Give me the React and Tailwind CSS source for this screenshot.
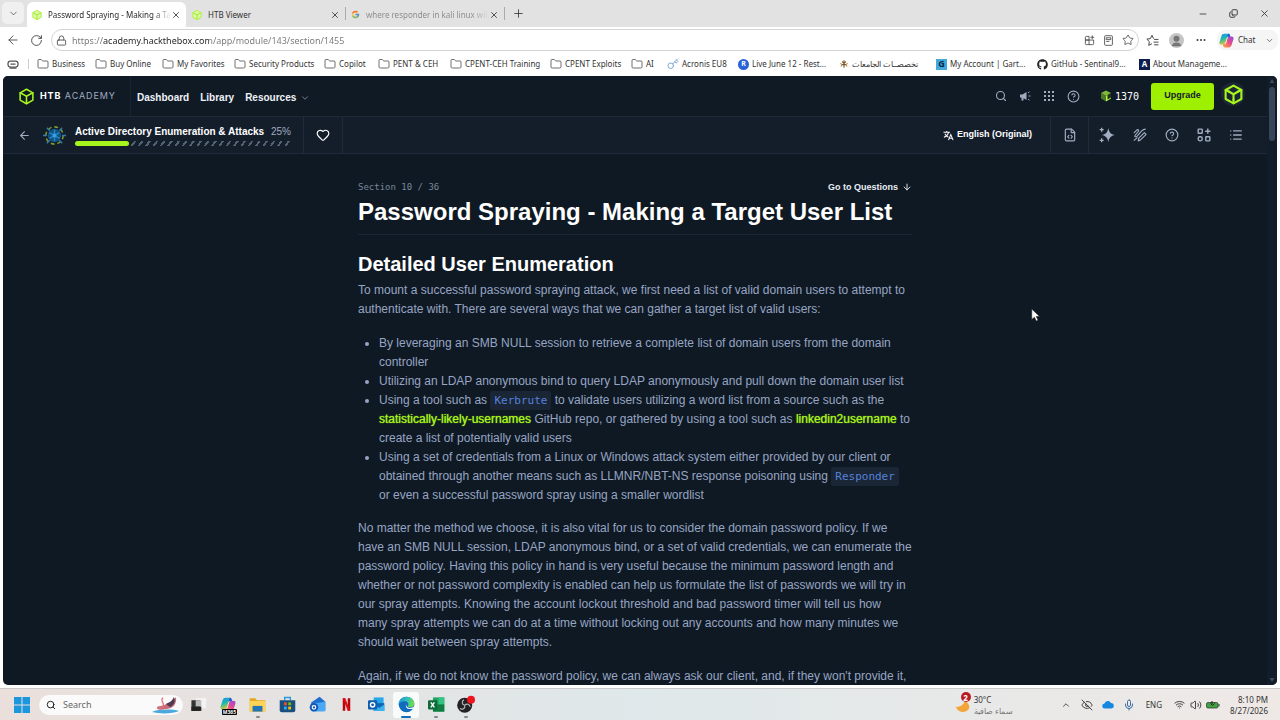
import React from "react";
import {
  ArrowLeft, ArrowDown, ChevronDown, ChevronUp, RotateCw, Lock, X, Plus, Minus, Star, Ellipsis,
  Search, Heart, CircleQuestionMark, List, FileCode, Mic, Wifi, Volume2, EyeOff, Folder, Copy, Key,
} from "lucide-react";
import { FcGoogle } from "react-icons/fc";
import { FaGithub } from "react-icons/fa";

const UI = "font-['Noto_Sans','Open_Sans',sans-serif]";

function Cube({ className, stroke = 2 }) {
  return (
    <svg viewBox="0 0 24 24" className={className} fill="none" stroke="currentColor" strokeWidth={stroke} strokeLinejoin="round" strokeLinecap="round" aria-hidden="true">
      <path d="M12 1.8 21 6.9v10.2l-9 5.1-9-5.1V6.9z" />
      <path d="M6.6 8.6 12 11.7l5.4-3.1M12 11.7v6.4" />
      <path d="M3 6.9l3.6 1.7M21 6.9l-3.6 1.7M12 18v4" />
    </svg>
  );
}

function CopilotMark({ className }) {
  return (
    <svg viewBox="0 0 24 24" className={className} aria-hidden="true">
      <defs>
        <linearGradient id="cpA" x1="0" y1="0" x2="0.4" y2="1">
          <stop offset="0" stopColor="#1b8ff0" /><stop offset="0.5" stopColor="#19b8b0" /><stop offset="1" stopColor="#e8c92a" />
        </linearGradient>
        <linearGradient id="cpB" x1="1" y1="0" x2="0.2" y2="1">
          <stop offset="0" stopColor="#8a4be8" /><stop offset="0.5" stopColor="#e5488f" /><stop offset="1" stopColor="#ff9a45" />
        </linearGradient>
      </defs>
      <path d="M8.500 1h6.200c1.400 0 2.200.8 2.600 2.200l.8 2.800h-2.900c-1.500 0-2.400.8-2.800 2.200L10 16.500c-.5 1.400-1.300 2-2.700 2H4C1.400 18.500.2 16.800.9 14.200L3.900 4.800C4.700 2.200 6.200 1 8.500 1z" fill="url(#cpA)" />
      <path d="M15.500 23H9.300c-1.400 0-2.200-.8-2.600-2.200L5.900 18h2.900c1.500 0 2.400-.8 2.800-2.200L14 7.500c.5-1.400 1.300-2 2.700-2H20c2.600 0 3.800 1.700 3.100 4.300l-3 9.400c-.8 2.600-2.300 3.800-4.600 3.800z" fill="url(#cpB)" />
      <path d="M14.700 1c1.400 0 2.200.8 2.600 2.200l.8 2.800h-2.900c-1.500 0-2.400.8-2.800 2.200z" fill="#2a54d8" />
    </svg>
  );
}

function TabCube() {
  return (
    <svg viewBox="0 0 24 24" className="size-[10px] shrink-0" aria-hidden="true">
      <path d="M12 1 22 6.500v11L12 23 2 17.500v-11z" fill="#dcfaa5" stroke="#b4f04a" strokeWidth="2.500" />
      <path d="M3 7l9 5 9-5M12 12v10" fill="none" stroke="#a4e83a" strokeWidth="2.500" />
    </svg>
  );
}

function Tabs() {
  return (
    <div className={`flex h-[27px] shrink-0 items-end bg-[#e2e2e2] text-[8px] text-[#333] ${UI}`}>
      <button aria-label="Tab actions" className="mb-[3px] ml-[2px] flex h-[22px] w-[22px] items-center justify-center rounded-[5px] bg-[#f0f0f0]">
        <ChevronDown className="size-[11px]" strokeWidth={1.5} />
      </button>
      <div className="ml-[3px] flex h-[25px] w-[159px] items-center rounded-t-[6px] bg-white pl-[5px]">
        <TabCube />
        <span className="ml-[6px] w-[123px] shrink-0 overflow-hidden whitespace-nowrap bg-linear-to-r from-[#222] from-85% to-white bg-clip-text text-transparent">Password Spraying - Making a Target</span>
        <button aria-label="Close tab"><X className="size-[10px]" strokeWidth={2} /></button>
      </div>
      <div className="flex h-[25px] w-[159px] items-center pl-[6px]">
        <TabCube />
        <span className="ml-[6px] w-[122px]">HTB Viewer</span>
        <button aria-label="Close tab"><X className="size-[10px]" strokeWidth={2} /></button>
      </div>
      <div className="mb-[7px] h-[13px] w-px bg-[#aaa]" />
      <div className="flex h-[25px] w-[158px] items-center pl-[5px]">
        <FcGoogle className="size-[9px] shrink-0 opacity-70" />
        <span className="ml-[6px] w-[123px] shrink-0 overflow-hidden whitespace-nowrap bg-linear-to-r from-[#888] from-85% to-[#e2e2e2] bg-clip-text text-transparent">where responder in kali linux will save</span>
        <button aria-label="Close tab"><X className="size-[10px]" strokeWidth={2} /></button>
      </div>
      <div className="mb-[7px] h-[13px] w-px bg-[#aaa]" />
      <button aria-label="New tab" className="mb-[7px] ml-[7px]"><Plus className="size-[13px]" strokeWidth={1.5} /></button>
      <div className="mb-[8px] ml-auto mr-[10px] flex items-center gap-[21px]">
        <button aria-label="Minimize"><Minus className="size-[10px]" strokeWidth={2} /></button>
        <button aria-label="Restore"><Copy className="size-[9px] -scale-y-100" strokeWidth={2.5} /></button>
        <button aria-label="Close"><X className="size-[11px]" strokeWidth={1.8} /></button>
      </div>
    </div>
  );
}

function Toolbar() {
  return (
    <div className={`flex h-[26px] shrink-0 items-center bg-white text-[#444] ${UI}`}>
      <button aria-label="Back" className="ml-[6px]"><ArrowLeft className="size-[14px]" strokeWidth={1.5} /></button>
      <button aria-label="Refresh" className="ml-[10px]"><RotateCw className="size-[13px]" strokeWidth={1.7} /></button>
      <div className="ml-[8px] flex h-[22px] flex-1 items-center rounded-full border border-[#d4d4d4] px-[4px]">
        <Lock className="size-[11px] shrink-0" strokeWidth={1.8} />
        <input
          aria-label="Address"
          defaultValue="https://academy.hackthebox.com/app/module/143/section/1455"
          className="ml-[5px] h-[16px] min-w-0 flex-1 bg-[linear-gradient(90deg,#777_31px,#222_31px,#222_137px,#777_137px)] bg-clip-text text-[9px] text-transparent caret-black outline-none"
        />
        <div className="flex items-center gap-[8px]">
          <button aria-label="Apps">
            <svg viewBox="0 0 24 24" className="size-[11px]" fill="none" stroke="currentColor" strokeWidth="1.800"><path d="M11 3H5a2 2 0 0 0-2 2v6h8zM3 11v8a2 2 0 0 0 2 2h6V11zM11 11h10v8a2 2 0 0 1-2 2h-8M18 1v8M14 5h8" /></svg>
          </button>
          <button aria-label="Immersive reader">
            <svg viewBox="0 0 24 24" className="size-[11px]" fill="none" stroke="currentColor" strokeWidth="1.800"><rect x="3.500" y="1.500" width="17" height="21" rx="2" /><path d="M7 6h10v4H7zM7 14h7" /></svg>
          </button>
          <button aria-label="Add favorite"><Star className="size-[12px]" strokeWidth={1.6} /></button>
        </div>
      </div>
      <button aria-label="Favorites" className="ml-[7px]">
        <svg viewBox="0 0 24 24" className="size-[13px]" fill="none" stroke="currentColor" strokeWidth="1.800" strokeLinejoin="round"><path d="M14 8.500 11 2.500 8 8.500l-6.500 1 4.700 4.600L5 21l6-3.200M15 10h8M14 15h9M15 20h8" /></svg>
      </button>
      <button aria-label="Profile" className="ml-[10px] size-[15px] overflow-hidden rounded-full bg-[#c4c4c4]">
        <svg viewBox="0 0 16 16" className="size-[15px]" fill="#757575"><circle cx="8" cy="6" r="3.200" /><path d="M3 14a5 4 0 0 1 10 0z" /></svg>
      </button>
      <button aria-label="More" className="ml-[11px]"><Ellipsis className="size-[12px]" strokeWidth={2.2} /></button>
      <button className="ml-[10px] mr-[2px] flex h-[20px] w-[61px] items-center rounded-[8px] bg-[#f5f5f5] pl-[2px] text-[8px] text-[#333]">
        <CopilotMark className="size-[15px]" />
        <span className="ml-[4px]">Chat</span>
        <ChevronDown className="ml-auto mr-[4px] size-[9px]" strokeWidth={1.7} />
      </button>
    </div>
  );
}

const folder = <Folder className="size-[12px] shrink-0 text-[#555]" strokeWidth={1.700} />;
const bookmarks = [
  { label: "Business", icon: folder, w: "w-[58px]" },
  { label: "Buy Online", icon: folder, w: "w-[67px]" },
  { label: "My Favorites", icon: folder, w: "w-[72px]" },
  { label: "Security Products", icon: folder, w: "w-[90px]" },
  { label: "Copilot", icon: folder, w: "w-[54px]" },
  { label: "PENT & CEH", icon: folder, w: "w-[72px]" },
  { label: "CPENT-CEH Training", icon: folder, w: "w-[100px]" },
  { label: "CPENT Exploits", icon: folder, w: "w-[81px]" },
  { label: "AI", icon: folder, w: "w-[36px]" },
  { label: "Acronis EU8", icon: <Key className="size-[12px] shrink-0 text-[#6f9bd1]" strokeWidth={1.800} />, w: "w-[71px]" },
  { label: "Live June 12 - Rest...", icon: <span className="flex size-[11px] shrink-0 items-center justify-center rounded-full bg-[#2a62d8] text-[7px] font-bold text-white">R</span>, w: "w-[101px]" },
  {
    label: "تخصصــات الجامعات", rtl: true, w: "w-[97px]",
    icon: <svg viewBox="0 0 16 16" className="size-[10px] shrink-0" fill="none" strokeWidth="1.800"><path d="M8 2v12M5 4l3 3 3-3" stroke="#8a5a2c" /><path d="M2 7l3 2-2 3M14 7l-3 2 2 3" stroke="#c98a3d" /><path d="M5 9h6" stroke="#555" /></svg>,
  },
  { label: "My Account | Gart...", icon: <span className="flex size-[11px] shrink-0 items-center justify-center bg-[#43a8dc] text-[9px] font-bold text-[#062b45]">G</span>, w: "w-[101px]" },
  { label: "GitHub - Sentinal9...", icon: <FaGithub className="size-[11px] shrink-0 text-[#222]" />, w: "w-[102px]" },
  { label: "About Manageme...", icon: <span className="flex size-[11px] shrink-0 items-center justify-center bg-[#0d1e4c] text-[8px] font-bold text-white">A</span>, w: "w-[90px]" },
];

function Bookmarks() {
  return (
    <nav className={`flex h-[23px] shrink-0 items-center overflow-hidden bg-white pb-[1px] text-[8px] text-[#333] ${UI}`}>
      <svg viewBox="0 0 24 18" className="ml-[7px] h-[9px] w-[12px]" fill="none" stroke="#555" strokeWidth="2.500"><rect x="2" y="2" width="20" height="12" rx="5" /><path d="M7 8h10M5 16h14" /></svg>
      <div className="ml-[9px] mr-[8px] h-[10px] w-px bg-[#ccc]" />
      {bookmarks.map((b) => (
        <a key={b.label} href="#" className={`flex shrink-0 items-center gap-[3px] whitespace-nowrap ${b.w}`}>
          {b.icon}
          <span dir={b.rtl ? "rtl" : "ltr"}>{b.label}</span>
        </a>
      ))}
    </nav>
  );
}

function SiteNav() {
  return (
    <header className="flex h-[41px] shrink-0 items-center border-b border-[#1d2938] bg-[#101a25] text-white">
      <a href="#" className="flex h-full w-[128px] items-center border-r border-[#18232f] pl-[15px]">
        <Cube className="size-[17px] text-[#a6f51c]" stroke={2.2} />
        <span className="ml-[5px] whitespace-nowrap font-['Inter',sans-serif] text-[9px] tracking-widest"><b>HTB</b> <span className="text-[#a0acc0]">ACADEMY</span></span>
      </a>
      <nav className="flex items-center gap-[11px] pl-[6px] pt-[3px] text-[10px] font-bold text-[#eef2f8]">
        <a href="#">Dashboard</a>
        <a href="#">Library</a>
        <a href="#" className="flex items-center">Resources <ChevronDown className="ml-[4px] size-[10px] text-[#8592a8]" /></a>
      </nav>
      <div className="ml-auto flex items-center pr-[22px] text-[#a0acc0]">
        <div className="flex items-center gap-[12px]">
          <button aria-label="Search"><Search className="size-[12px]" strokeWidth={2.2} /></button>
          <button aria-label="Announcements">
            <svg viewBox="0 0 24 24" className="size-[12px]" fill="currentColor"><path d="M2 9h5l8-5v16l-8-5H2zM5 15h4v6H5z" /><path d="M19 12h4M18 6l3-2.500M18 18l3 2.500" stroke="currentColor" strokeWidth="2" /></svg>
          </button>
          <button aria-label="Apps">
            <svg viewBox="0 0 12 12" className="size-[12px]" fill="currentColor"><path d="M1 1h2v2H1zM5 1h2v2H5zM9 1h2v2H9zM1 5h2v2H1zM5 5h2v2H5zM9 5h2v2H9zM1 9h2v2H1zM5 9h2v2H5zM9 9h2v2H9z" /></svg>
          </button>
          <button aria-label="Help"><CircleQuestionMark className="size-[13px]" strokeWidth={2} /></button>
        </div>
        <svg viewBox="0 0 24 24" className="ml-[20px] size-[12px]" aria-hidden="true"><path d="M12 1l10 5-10 6L2 6z" fill="#7fb83a" /><path d="M2 6l10 6v11L2 17z" fill="#4c7a26" /><path d="M22 6l-10 6v11l10-6z" fill="#b6f442" /><path d="M22 6l-7 4v9l7-4z" fill="#1d3418" /></svg>
        <span className="ml-[3px] font-['DejaVu_Sans_Mono',monospace] text-[10px] text-white">1370</span>
        <button className="ml-[12px] h-[27px] w-[63px] rounded-[3px] bg-[#9fef00] text-[9px] font-bold text-[#14202c]">Upgrade</button>
        <button aria-label="Account" className="mb-[4px] ml-[7px] flex size-[24px] items-center justify-center rounded-full bg-[#1b2735]">
          <Cube className="size-[21px] text-[#a6f51c]" stroke={2.4} />
        </button>
      </div>
    </header>
  );
}

function ModuleBar() {
  return (
    <div className="flex h-[37px] shrink-0 items-center border-b border-[#1f2b3a] bg-[#141e2b] text-[#a0acc0]">
      <button aria-label="Back to module" className="ml-[15px]"><ArrowLeft className="size-[13px]" strokeWidth={2} /></button>
      <svg viewBox="0 0 24 24" className="ml-[12px] size-[23px]" aria-hidden="true">
        <circle cx="12" cy="12" r="9" fill="none" stroke="#7d9a2c" strokeWidth="1.600" strokeDasharray="4 3" />
        <path d="M0 12h4M20 12h4M4 4l3 3M20 4l-3 3M4 20l3-3M20 20l-3-3" stroke="#2f7fae" strokeWidth="1.500" />
        <circle cx="12" cy="12" r="7" fill="#12507f" />
        <path d="M12 6v12M6.800 9l10.400 6M17.200 9 6.800 15" stroke="#2285c8" strokeWidth="1.600" />
        <circle cx="12" cy="12" r="2" fill="#35a3de" />
      </svg>
      <div className="ml-[9px] w-[216px]">
        <div className="flex items-center justify-between leading-[13px]">
          <span className="whitespace-nowrap text-[10px] font-bold text-white">Active Directory Enumeration &amp; Attacks</span>
          <span className="text-[10px]">25%</span>
        </div>
        <div className="mt-[3px] flex h-[5px]" role="progressbar" aria-label="Module progress" aria-valuenow={25} aria-valuemin={0} aria-valuemax={100}>
          <div className="w-1/4 rounded-full bg-[#a6f51c]" />
          <div className="flex-1 bg-[repeating-linear-gradient(125deg,#141e2b_0px,#141e2b_4px,#526074_4px,#526074_6px)]" />
        </div>
      </div>
      <div className="ml-[12px] flex h-full w-[40px] items-center justify-center border-x border-[#1f2b3a]">
        <button aria-label="Favorite"><Heart className="size-[14px] text-white" strokeWidth={2} /></button>
      </div>
      <button className="ml-auto flex items-center gap-[3px] pr-[18px] text-[9px] font-bold text-white">
        <svg viewBox="0 0 24 24" className="size-[11px]" fill="none" stroke="currentColor" strokeWidth="2.200"><path d="M1 5h14M8 2v3M12 5c-1 5-5 9-10 11M4 8c2 4 5 6 8 8M12 22l5-12 5 12M14 18h6" /></svg>
        English (Original)
      </button>
      <div className="flex h-full w-[39px] items-center justify-center border-x border-[#1f2b3a]">
        <button aria-label="Resources"><FileCode className="size-[14px]" strokeWidth={2} /></button>
      </div>
      <div className="flex items-center gap-[18px] pl-[10px] pr-[24px]">
        <button aria-label="Assistant">
          <svg viewBox="0 0 24 24" className="size-[16px]" fill="currentColor"><path d="M14 1c1 7 4 10 10 11-6 1-9 4-10 11-1-7-4-10-10-11 6-1 9-4 10-11z" /><path d="M4 1v6M1 4h6M4 17v6M1 20h6" stroke="currentColor" strokeWidth="2" /></svg>
        </button>
        <button aria-label="Notes">
          <svg viewBox="0 0 24 24" className="size-[14px]" fill="none" stroke="currentColor" strokeWidth="2" strokeLinejoin="round" strokeLinecap="round"><path d="M9 22l1-4.500L19.500 8l3 3-9.500 9.500zM2 8l4-4c2-2 5-1 3 2l-5 6c-2 3 0 4 3 2l8-9c2-2 4-3 6-3M2 21l5-4" /></svg>
        </button>
        <button aria-label="Help"><CircleQuestionMark className="size-[14px]" strokeWidth={2} /></button>
        <button aria-label="Widgets">
          <svg viewBox="0 0 24 24" className="size-[14px]" fill="none" stroke="currentColor" strokeWidth="2.400"><rect x="2" y="2" width="7" height="7" rx="1" /><rect x="2" y="15" width="7" height="7" rx="3" /><rect x="15" y="15" width="7" height="7" rx="1" /><path d="M18.500 1v9M14 5.500h9" /></svg>
        </button>
        <button aria-label="Contents"><List className="size-[14px]" strokeWidth={2.4} /></button>
      </div>
    </div>
  );
}

function Code({ children }) {
  return <code className="rounded-[2px] bg-[#1a2535] px-[4px] py-[3px] font-['DejaVu_Sans_Mono',monospace] text-[11px] text-[#5583dc]">{children}</code>;
}

function TextLink({ children }) {
  return <a href="#" className="text-[#a6f51c] [text-shadow:0_0_1px_#a6f51c]">{children}</a>;
}

function Article() {
  return (
    <article className="ml-[355px] w-[554px] pt-[26px] text-[12px] leading-[19px] text-[#97a5c4]">
      <div className="flex h-[14px] items-center justify-between">
        <span className="font-['DejaVu_Sans_Mono',monospace] text-[9px] text-[#7a879e]">Section 10 / 36</span>
        <a href="#questions" className="flex items-center gap-[4px] text-[9px] font-bold text-[#e8edf5]">Go to Questions <ArrowDown className="size-[10px]" strokeWidth={2.2} /></a>
      </div>
      <h1 className="whitespace-nowrap border-b border-[#1a2634] pb-[8px] pt-[3px] text-[24px] font-bold leading-[29px] text-white">Password Spraying - Making a Target User List</h1>
      <h2 className="pt-[15px] text-[20px] font-bold leading-[28px] text-white">Detailed User Enumeration</h2>
      <p className="mt-[3px] whitespace-nowrap">
        To mount a successful password spraying attack, we first need a list of valid domain users to attempt to<br />
        authenticate with. There are several ways that we can gather a target list of valid users:
      </p>
      <ul className="mt-[15px] list-disc whitespace-nowrap pl-[21px]">
        <li>By leveraging an SMB NULL session to retrieve a complete list of domain users from the domain<br />controller</li>
        <li>Utilizing an LDAP anonymous bind to query LDAP anonymously and pull down the domain user list</li>
        <li>
          Using a tool such as <Code>Kerbrute</Code> to validate users utilizing a word list from a source such as the<br />
          <TextLink>statistically-likely-usernames</TextLink> GitHub repo, or gathered by using a tool such as <TextLink>linkedin2username</TextLink> to<br />
          create a list of potentially valid users
        </li>
        <li>
          Using a set of credentials from a Linux or Windows attack system either provided by our client or<br />
          obtained through another means such as LLMNR/NBT-NS response poisoning using <Code>Responder</Code><br />
          or even a successful password spray using a smaller wordlist
        </li>
      </ul>
      <p className="mt-[14px] whitespace-nowrap">
        No matter the method we choose, it is also vital for us to consider the domain password policy. If we<br />
        have an SMB NULL session, LDAP anonymous bind, or a set of valid credentials, we can enumerate the<br />
        password policy. Having this policy in hand is very useful because the minimum password length and<br />
        whether or not password complexity is enabled can help us formulate the list of passwords we will try in<br />
        our spray attempts. Knowing the account lockout threshold and bad password timer will tell us how<br />
        many spray attempts we can do at a time without locking out any accounts and how many minutes we<br />
        should wait between spray attempts.
      </p>
      <p className="mt-[15px] whitespace-nowrap">Again, if we do not know the password policy, we can always ask our client, and, if they won't provide it,</p>
    </article>
  );
}

const apps = [
  { name: "Task view", art: <svg viewBox="0 0 24 24" className="size-[17px]"><path d="M8 3h15v14H8z" fill="#f3f3f3" /><path d="M2 6h12v15H2z" fill="#333" /><path d="M8 6h8v9H8z" fill="#bbb" /><path d="M2 15h14v6H2z" fill="#222" /></svg> },
  { name: "Microsoft 365 Copilot", art: <span className="relative"><CopilotMark className="size-[16px]" /><span className="absolute -bottom-[2px] left-[2px] rounded-[1px] bg-black px-[1px] text-[5px] font-bold leading-[6px] text-white">M365</span></span> },
  { name: "File Explorer", run: true, art: <svg viewBox="0 0 24 24" className="size-[17px]"><path d="M1 3h8l2 3h12v16H1z" fill="#e8a71e" /><path d="M1 7h22v15H1z" fill="#ffd358" /><path d="M5 14h14v8H5z" fill="#2475b8" /></svg> },
  { name: "Microsoft Store", art: <svg viewBox="0 0 24 24" className="size-[17px]"><path d="M8 6V2h8v4" fill="none" stroke="#2b9be0" strokeWidth="2" /><path d="M1 6h22v14a3 3 0 0 1-3 3H4a3 3 0 0 1-3-3z" fill="#17507f" /><path d="M7 9h4v4H7z" fill="#f25022" /><path d="M13 9h4v4h-4z" fill="#7fba00" /><path d="M7 15h4v4H7z" fill="#35a8f0" /><path d="M13 15h4v4h-4z" fill="#ffb900" /></svg> },
  { name: "Mail", art: <svg viewBox="0 0 24 24" className="size-[17px]"><path d="M3 9 15 1l8 7v12H3z" fill="#1f6fd0" /><path d="M3 11 23 8v12a2 2 0 0 1-2 2H5z" fill="#4aa8f5" /><circle cx="7" cy="16" r="6" fill="#1458b3" /><circle cx="7" cy="16" r="2.500" fill="none" stroke="#fff" strokeWidth="1.600" /></svg> },
  { name: "Netflix", art: <svg viewBox="0 0 24 24" className="size-[15px]"><path d="M6 2h4v20H6zM14 2h4v20h-4z" fill="#b1060f" /><path d="M6 2h4l8 20h-4z" fill="#e50914" /></svg> },
  { name: "Outlook", art: <svg viewBox="0 0 24 24" className="size-[17px]"><path d="M8 2h14v10H8z" fill="#28a8ea" /><path d="M8 10h15v11H8z" fill="#1066b5" /><path d="M8 12l8 5 7-5v9H8z" fill="#3bb2ee" /><rect x="0" y="6" width="13" height="13" rx="1.500" fill="#0f5fb0" /><circle cx="6.500" cy="12.500" r="3" fill="none" stroke="#fff" strokeWidth="2" /></svg> },
  {
    name: "Edge", run: true, active: true,
    art: (
      <svg viewBox="0 0 24 24" className="size-[17px]">
        <defs><linearGradient id="eg" x1="0" y1="0" x2="1" y2="0.300"><stop offset="0" stopColor="#1b8fd8" /><stop offset="0.600" stopColor="#35c1b8" /><stop offset="1" stopColor="#6fd84f" /></linearGradient></defs>
        <circle cx="12" cy="12" r="11" fill="#0f6cbd" />
        <path d="M1 12C1 5 6 1 12 1c7 0 11 5 11 9.500 0 3.500-3 5.500-6 5.500-2.500 0-4-1-3-2.500 2-3-1-6-5-6-4 0-7 2-8 4.500z" fill="url(#eg)" />
        <path d="M12.500 10c-1.500 1-1.500 4 .5 5.500 2.500 2 7 2 10-1l-1 3c-3 1.500-8 1.500-10-1-1.500-2-1-5 .5-6.500z" fill="#f7fafc" />
      </svg>
    ),
  },
  { name: "Excel", run: true, art: <svg viewBox="0 0 24 24" className="size-[17px]"><path d="M7 2h16v20H7z" fill="#21a366" /><path d="M15 2h8v10h-8z" fill="#33c481" /><path d="M7 12h16v10H7z" fill="#107c41" /><rect x="0" y="6" width="13" height="13" rx="1.500" fill="#0e6a38" /><path d="M4 9l5 7M9 9l-5 7" stroke="#fff" strokeWidth="2" /></svg> },
  { name: "OBS Studio", run: true, art: <svg viewBox="0 0 24 24" className="size-[19px]"><circle cx="11" cy="13" r="9.500" fill="#222" /><path d="M11 13c-4-1-4-5-1-7M11 13c3-3 6-1 7 2M11 13c1 4-3 6-6 4" fill="none" stroke="#bbb" strokeWidth="1.400" /><circle cx="19" cy="6" r="5" fill="#f0141e" /></svg> },
];

function Taskbar() {
  return (
    <footer className={`flex h-[32px] shrink-0 items-center border-t border-[#c9c9c9] bg-linear-to-r from-[#eadfdb] via-[#dfe8ea] to-[#efe9e6] ${UI}`}>
      <button aria-label="Start" className="ml-[14px]">
        <svg viewBox="0 0 16 16" className="size-[16px]" fill="#1c96dc"><path d="M0 0h7.500v7.500H0zM8.500 0H16v7.500H8.500zM0 8.500h7.500V16H0zM8.500 8.500H16V16H8.500z" /></svg>
      </button>
      <div className="ml-[9px] flex h-[20px] w-[144px] items-center rounded-full bg-[#fafafa] pl-[7px]">
        <Search className="size-[10px] shrink-0 text-[#222]" strokeWidth={2.4} />
        <input aria-label="Search" placeholder="Search" className="ml-[7px] w-[88px] text-[9px] outline-none placeholder:text-[#666]" />
        <svg viewBox="0 0 30 18" className="h-[18px] w-[30px] shrink-0" aria-hidden="true"><path d="M1 16c6-3 20-3 27-1-6 3-20 3-27 1z" fill="#4aa8dd" /><path d="M6 12c0-3 6-1 9-4 3-2 7-2 10-7 1 7-3 12-10 12-5 1-9 1-9-1z" fill="#c86a78" /><path d="M15 8c3-1 6-3 8-7 2 5 0 8-4 10z" fill="#4e3a52" /><path d="M8 12c5-1 5-3 4-5s-2-4 0-5" fill="none" stroke="#e2707a" strokeWidth="1.400" /></svg>
      </div>
      <div className="ml-[2px] flex w-[294px] items-center justify-between">
        {apps.map((a) => (
          <button key={a.name} aria-label={a.name} className={`relative flex h-[26px] w-[26px] items-center justify-center rounded-[3px] ${a.active ? "bg-white/80" : ""}`}>
            {a.art}
            {a.run && <span className={`absolute bottom-0 left-1/2 h-[2px] -translate-x-1/2 rounded-full ${a.active ? "w-[10px] bg-[#0f6cbd]" : "w-[4px] bg-[#888]"}`} />}
          </button>
        ))}
      </div>
      <div className="ml-auto flex items-center text-[8px] leading-[11px] text-[#333]">
        <button className="flex items-center text-left">
          <span className="relative mr-[2px] block size-[17px]">
            <svg viewBox="0 0 24 24" className="size-[17px]"><path d="M1 15c4 1 10-1 13-8 5 2 8 8 5 12-5 6-15 4-18-4z" fill="#f2a63a" /></svg>
            <span className="absolute -top-[4px] right-[1px] flex size-[10px] items-center justify-center rounded-full bg-[#b81c22] text-[8px] font-bold text-white">2</span>
          </span>
          <span className="w-[87px]"><span className="block">30°C</span><span className="block text-[#777]">سماء صافية</span></span>
        </button>
        <button aria-label="Hidden icons"><ChevronUp className="size-[10px]" strokeWidth={2} /></button>
        <EyeOff className="ml-[10px] size-[12px]" strokeWidth={1.8} />
        <svg viewBox="0 0 24 16" className="ml-[9px] h-[8px] w-[12px]"><path d="M6 15a5 5 0 0 1-1-10 7 7 0 0 1 13-1 5.500 5.500 0 0 1 0 11z" fill="#1687e0" /></svg>
        <Mic className="ml-[9px] size-[12px] text-[#3b6ea5]" strokeWidth={2} />
        <span className="ml-[11px]">ENG</span>
        <Wifi className="ml-[12px] size-[11px]" strokeWidth={2} />
        <Volume2 className="ml-[5px] size-[12px]" strokeWidth={1.8} />
        <svg viewBox="0 0 28 16" className="ml-[4px] h-[10px] w-[14px]"><rect x="1" y="3" width="23" height="11" rx="3" fill="#3fa33f" stroke="#333" strokeWidth="1.500" /><path d="M25 6h2v5h-2z" fill="#333" /><path d="M12 0v6M9 5l4 4 4-4" stroke="#222" strokeWidth="2" fill="none" /></svg>
        <span className="ml-[8px] mr-[12px] w-[40px] text-right">8:10 PM<br />8/27/2026</span>
      </div>
    </footer>
  );
}

export default function App() {
  return (
    <div className="relative flex h-screen flex-col overflow-hidden bg-white font-['Liberation_Sans',Arial,sans-serif]">
      <Tabs />
      <Toolbar />
      <Bookmarks />
      <main className="mx-[3px] mb-[3px] flex min-h-0 flex-1 overflow-hidden rounded-[5px] bg-[#0f1923]">
        <div className="flex min-w-0 flex-1 flex-col overflow-hidden">
          <SiteNav />
          <ModuleBar />
          <Article />
        </div>
        <div className="flex w-[10px] shrink-0 flex-col items-center justify-between bg-[#121d29] py-[3px]">
          <div className="flex flex-col items-center gap-[4px]">
            <svg viewBox="0 0 6 5" className="h-[4px] w-[6px]" fill="#3d4b5c"><path d="M3 0l3 5H0z" /></svg>
            <div className="h-[54px] w-[6px] rounded-full bg-[#37465a]" />
          </div>
          <svg viewBox="0 0 6 5" className="h-[4px] w-[6px]" fill="#3d4b5c"><path d="M0 0h6L3 5z" /></svg>
        </div>
      </main>
      <Taskbar />
      <svg viewBox="0 0 12 18" className="pointer-events-none absolute left-[1031px] top-[308px] h-[14px] w-[9px]" aria-hidden="true"><path d="M1 1v14l3.500-3 2.500 5 2.500-1-2.500-5h4.500z" fill="#fff" stroke="#222" strokeWidth="0.800" /></svg>
    </div>
  );
}
